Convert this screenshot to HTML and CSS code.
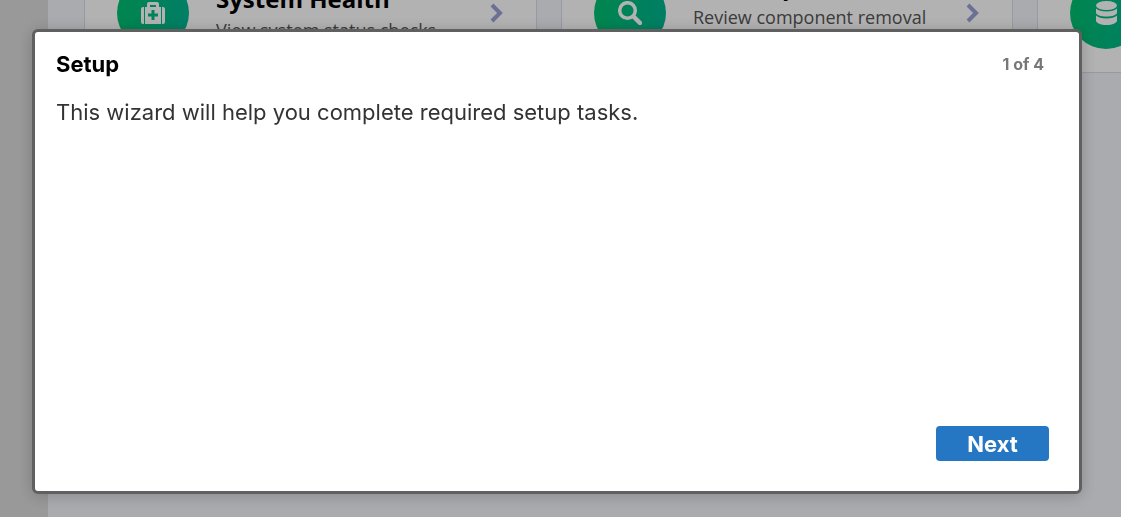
FILE: index.html
```html
<!DOCTYPE html>
<html lang="en">
<head>
<meta charset="utf-8">
<meta name="viewport" content="width=device-width, initial-scale=1">
<title>Setup</title>
<link rel="stylesheet" href="styles.css">
</head>
<body>
<div class="app">
  <aside class="sidebar"></aside>
  <main class="content">
    <section class="card">
      <span class="badge">
        <svg width="24" height="24" viewBox="0 0 24 24" fill="currentColor" aria-hidden="true"><path d="M3 6v17H2a2 2 0 0 1-2-2V8a2 2 0 0 1 2-2zM21 6h1a2 2 0 0 1 2 2v13a2 2 0 0 1-2 2h-1z"/><path fill-rule="evenodd" d="M6 6V3a2 2 0 0 1 2-2h8a2 2 0 0 1 2 2v3h2v17H4V6zM9 4v2h6V4zM10.500 9v3.500H7v3h3.500V19h3v-3.500H17v-3h-3.500V9z"/></svg>
      </span>
      <div class="card-text">
        <h2 class="card-title">System Health</h2>
        <p class="card-description">View system status checks</p>
      </div>
      <svg class="chevron" width="14" height="20" viewBox="0 0 14 20" aria-hidden="true"><path d="M2 2l8 8-8 8"/></svg>
    </section>
    <section class="card">
      <span class="badge">
        <svg width="24" height="24" viewBox="0 0 24 24" fill="none" stroke="currentColor" aria-hidden="true"><circle cx="9.500" cy="9.500" r="7.800" stroke-width="3.500"/><path d="M15.500 15.500l6.500 6.500" stroke-width="4.500" stroke-linecap="round"/></svg>
      </span>
      <div class="card-text">
        <h2 class="card-title">Clean up</h2>
        <p class="card-description two-line">Review component removal</p>
      </div>
      <svg class="chevron" width="14" height="20" viewBox="0 0 14 20" aria-hidden="true"><path d="M2 2l8 8-8 8"/></svg>
    </section>
    <section class="card">
      <span class="badge">
        <svg width="21" height="24" viewBox="0 0 21 24" fill="currentColor" aria-hidden="true"><ellipse cx="10.500" cy="4.500" rx="10.500" ry="4.500"/><path d="M0 7.500c2 2 6 3 10.500 3s8.500-1 10.500-3v4c0 2.500-4.700 4-10.500 4S0 14 0 11.500z"/><path d="M0 14.500c2 2 6 3 10.500 3s8.500-1 10.500-3v5c0 2.500-4.700 4.500-10.500 4.500S0 22 0 19.500z"/></svg>
      </span>
    </section>
  </main>
</div>
<div class="overlay">
  <div class="wizard" role="dialog" aria-modal="true" aria-labelledby="wizard-title">
    <header class="wizard-header">
      <h1 class="wizard-title" id="wizard-title">Setup</h1>
      <span class="wizard-progress">1 of 4</span>
    </header>
    <p class="wizard-body">This wizard will help you complete required setup tasks.</p>
    <footer class="wizard-footer">
      <button class="next-button" type="button">Next</button>
    </footer>
  </div>
</div>
</body>
</html>
```
FILE: styles.css
```css
* {
  box-sizing: border-box;
}

body {
  margin: 0;
  overflow: hidden;
  font-family: "Open Sans", "Noto Sans", sans-serif;
}

h1,
h2,
p {
  margin: 0;
}

.app {
  display: flex;
  height: 100vh;
  overflow: hidden;
  background: #f3f5fb;
}

.sidebar {
  flex: 0 0 48px;
  background: #dbdbdb;
}

.content {
  flex: 1;
  min-width: 0;
  display: grid;
  grid-template-columns: 453px 452px 453px;
  align-content: start;
  gap: 24px;
  margin-top: -48px;
  padding-left: 36px;
}

.card {
  display: flex;
  align-items: center;
  height: 121px;
  padding: 0 32px;
  border: 1px solid #d9dbed;
  background: #fff;
}

.badge {
  flex: 0 0 72px;
  height: 72px;
  display: flex;
  align-items: center;
  justify-content: center;
  border-radius: 50%;
  background: linear-gradient(90deg, #00c070, #00b591);
  color: #fff;
}

.card-text {
  flex: 1;
  margin-left: 27px;
  padding-top: 3px;
}

.card-title {
  margin-bottom: 2px;
  font-size: 24px;
  line-height: 30px;
  color: #000;
}

.card-description {
  font-size: 18px;
  line-height: 28px;
  color: #555;
}

.two-line {
  min-height: 54px;
}

.chevron {
  flex: none;
  fill: none;
  stroke: #9ba1d5;
  stroke-width: 4;
}

.overlay {
  position: fixed;
  inset: 0;
  display: flex;
  padding: 29px 39px 23px 32px;
  background: rgba(0, 0, 0, 0.3);
}

.wizard {
  flex: 1;
  display: flex;
  flex-direction: column;
  padding: 16px 30px 30px 21px;
  border: 3px solid #606060;
  border-radius: 6px;
  background: #fff;
  box-shadow: 0 2px 16px rgba(0, 0, 0, 0.2);
  font-family: Inter, "Open Sans", sans-serif;
}

.wizard-header {
  display: flex;
  align-items: center;
  justify-content: space-between;
  padding-right: 5px;
}

.wizard-title {
  font-size: 22px;
  line-height: 32px;
  color: #000;
}

.wizard-progress {
  font-size: 16px;
  font-weight: 700;
  color: #777;
}

.wizard-body {
  margin-top: 16px;
  font-size: 22px;
  line-height: 32px;
  color: #333;
}

.wizard-footer {
  display: flex;
  justify-content: flex-end;
  margin-top: auto;
}

.next-button {
  min-width: 113px;
  height: 35px;
  padding: 0 24px;
  border: 0;
  border-radius: 4px;
  background: #2576c3;
  color: #fff;
  font-family: inherit;
  font-size: 22px;
  font-weight: 700;
}
```
